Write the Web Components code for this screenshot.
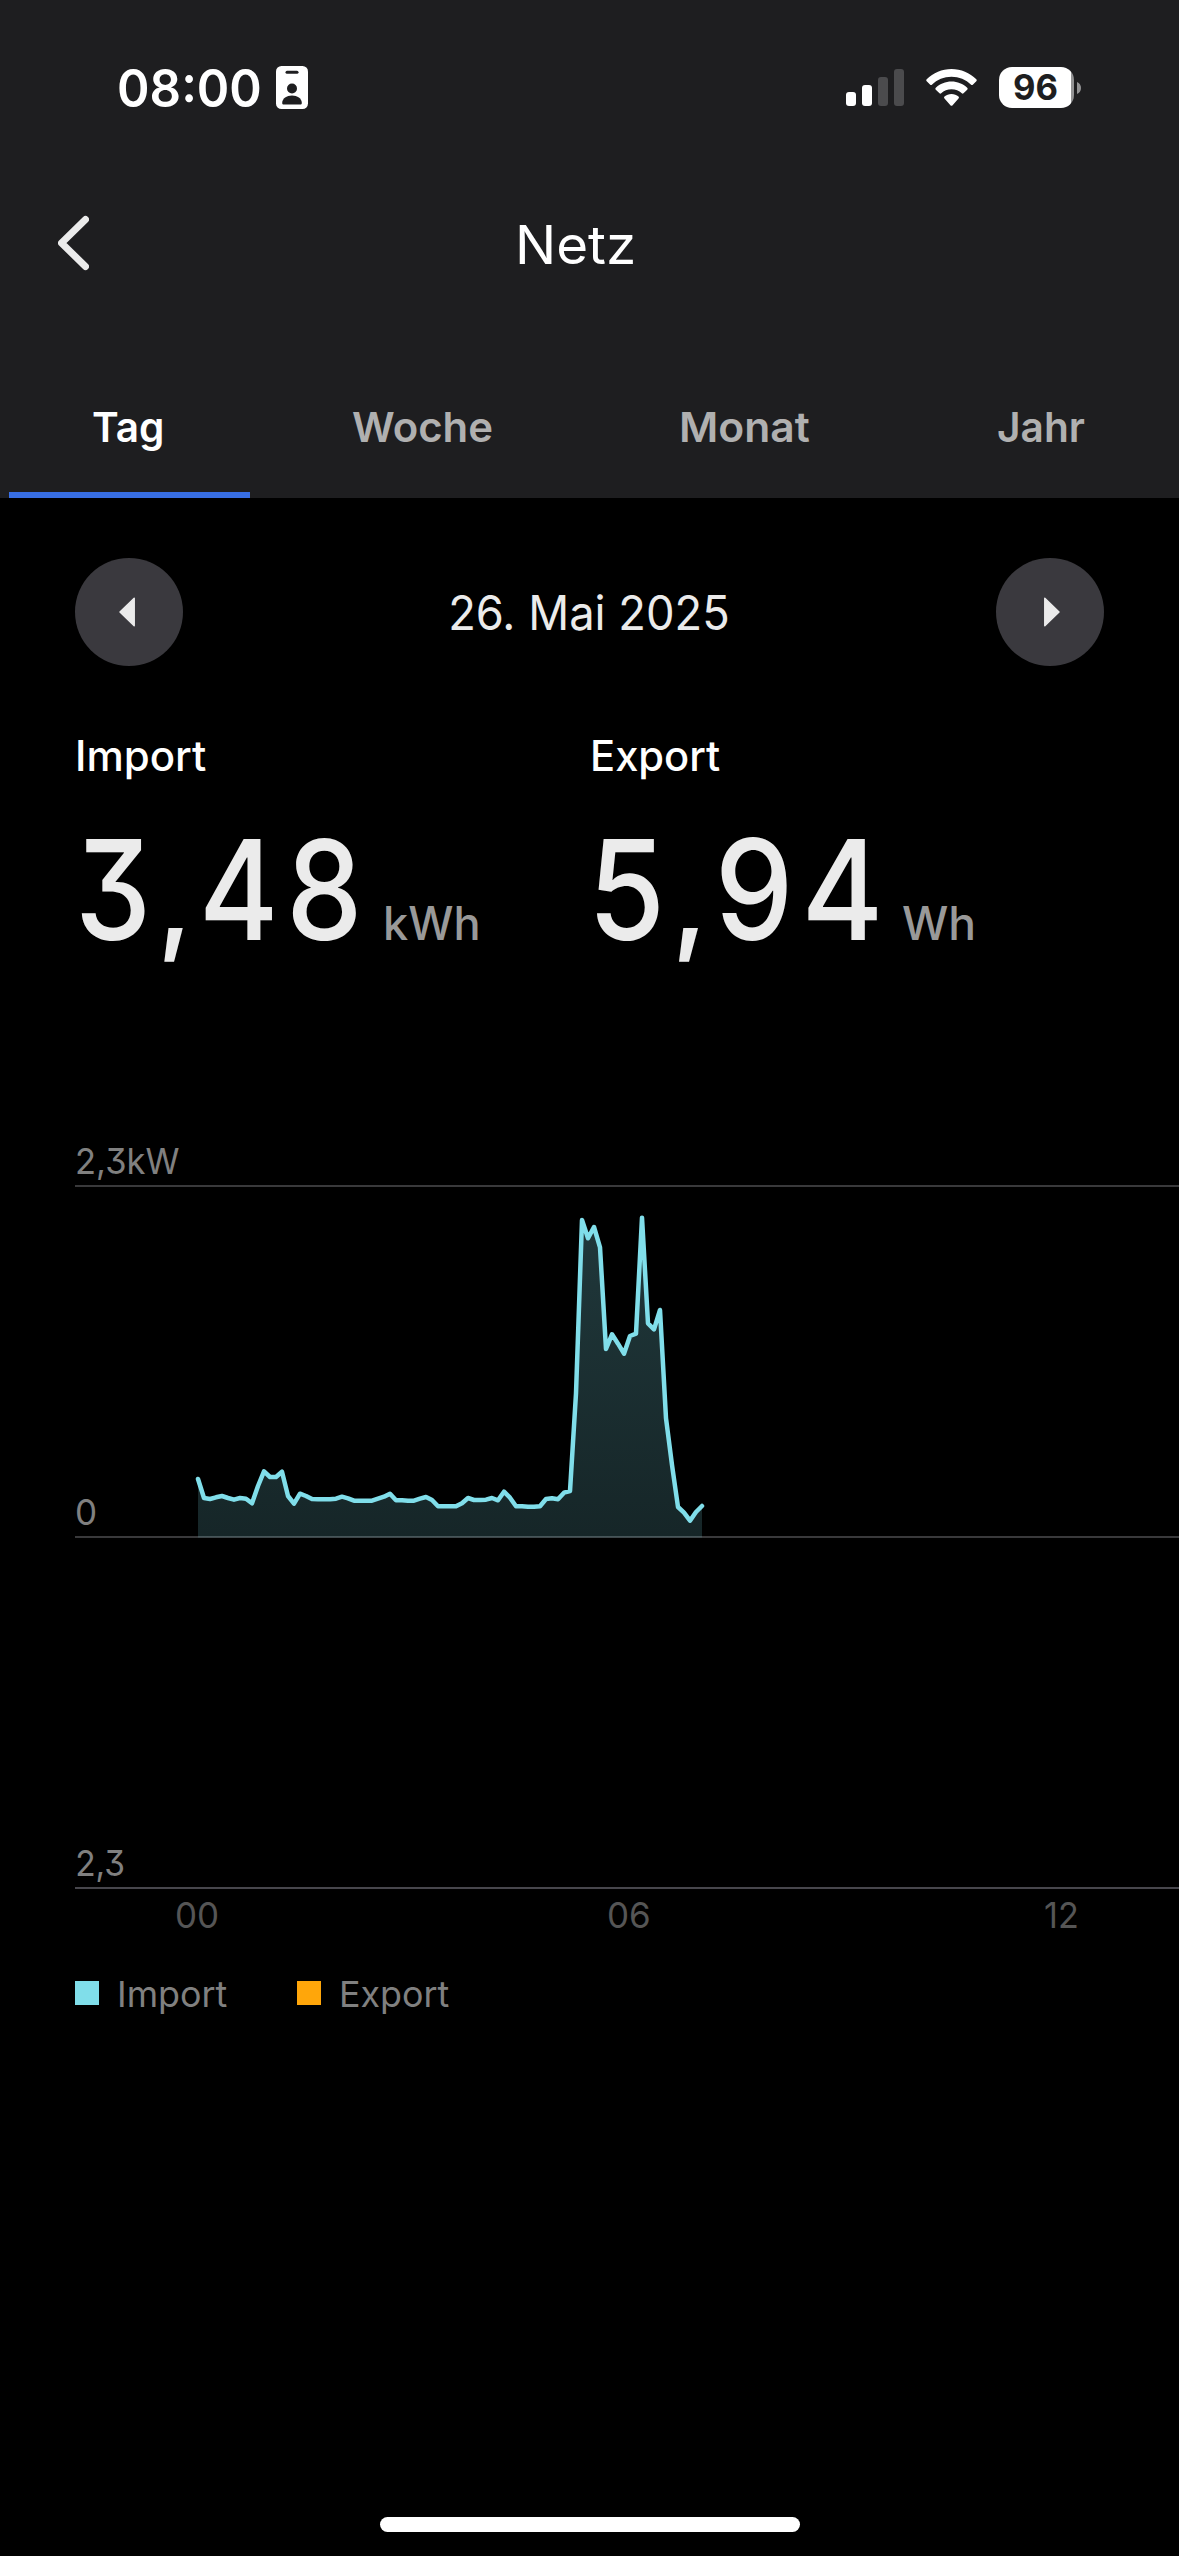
<!DOCTYPE html>
<html lang="de">
<head>
<meta charset="utf-8">
<title>Netz</title>
<style>
html,body{margin:0;background:#000;}
body{width:1179px;height:2556px;overflow:hidden;font-family:Inter,"Liberation Sans",sans-serif;color:#ebebeb;}
</style>
</head>
<body>
<energy-page></energy-page>
<script>
const ctx = document.createElement('canvas').getContext('2d');
const define = (name, html, setup) => customElements.define(name, class extends HTMLElement {
  connectedCallback() {
    if (this.shadowRoot) return;
    this.attachShadow({mode: 'open'}).innerHTML = html;
    if (setup) setup.call(this, this.shadowRoot);
  }
});

/* One line of text whose inked part fills exactly "w" pixels, centred on the cap height. */
define('fit-text', `<style>
:host{display:block;flex:none;white-space:pre}
span{display:block;width:max-content;transform-origin:0 50%;font-feature-settings:"cv09" 1}
b{font-size:.8em;font-weight:700;line-height:0}
</style><span></span>`, function (root) {
  const g = k => this.getAttribute(k);
  const w = +g('w'), size = +g('size'), weight = g('weight') || 400, ls = +(g('ls') || 0);
  const text = g('text'), h = +(g('h') || Math.round(size * 1.2));
  const span = root.querySelector('span');
  if (g('comma') !== null) span.innerHTML = text.replace(',', '<b>,</b>');
  else span.textContent = text;
  ctx.font = `${weight} ${size}px Inter`;
  ctx.letterSpacing = ls + 'px';
  const m = ctx.measureText(text);
  this.style.cssText += `;width:${w}px;height:${h}px`;
  const css = `font-size:${size}px;font-weight:${weight};letter-spacing:${ls}px;line-height:${h}px;`;
  span.style.cssText = css;
  const real = span.getBoundingClientRect().width || m.width;
  const left = -m.actualBoundingBoxLeft, ink = m.actualBoundingBoxRight - left + real - m.width;
  const k = w / ink;
  span.style.cssText = css + `transform:translateX(${-left * k}px) scaleX(${k})`;
});

define('status-bar', `<style>
:host{display:flex;height:44px;padding:66px 98px 0 119px;align-items:flex-start;color:#fff}
.badge{margin-left:16px}
.signal{margin-left:auto}
.wifi{margin-left:22px}
.bat{margin-left:22px;display:flex;gap:3px;align-items:center;height:43px}
.body{display:flex;align-items:center;justify-content:center;width:75px;height:41px;border-radius:13px;color:#1e1e20;background:linear-gradient(90deg,#fff 72px,#929293 72px)}
svg{display:block;flex:none}
</style>
<fit-text text="08:00" w="141" size="51.5" weight="600" h="44"></fit-text>
<svg class="badge" width="32" height="44" viewBox="0 0 32 44"><rect width="32" height="43" rx="5.500" fill="#fff"/><g fill="#1e1e20"><rect x="9.500" y="4.700" width="13" height="3" rx="1.500"/><circle cx="16" cy="22.500" r="5"/><path d="M6.200 37c0-4.600 4.500-7.500 9.800-7.500s9.800 2.900 9.800 7.500c0 1-.7 1.500-1.500 1.500H7.700c-.8 0-1.500-.5-1.500-1.500z"/></g></svg>
<svg class="signal" width="58" height="44" viewBox="0 0 58 44"><g fill="#fff"><rect y="26" width="10" height="14" rx="3"/><rect x="16" y="19" width="10" height="21" rx="3"/></g><g fill="#4b4b4d"><rect x="32" y="11" width="10" height="29" rx="3"/><rect x="48" y="3" width="10" height="37" rx="3"/></g></svg>
<svg class="wifi" width="51" height="44" viewBox="0 0 51 44" fill="#fff"><path d="M25.500 3c9.500 0 18.300 3.800 24.800 10.300.6.600.6 1.300 0 1.900l-3.500 3.500c-.5.500-1.200.5-1.700 0C39.900 13.600 33 10.700 25.500 10.700S11.100 13.600 5.900 18.700c-.5.500-1.200.5-1.700 0L.7 15.200c-.6-.6-.6-1.300 0-1.900C7.200 6.800 16 3 25.500 3z"/><path d="M25.500 15.600c6 0 11.500 2.300 15.700 6.200.6.600.6 1.300 0 1.900l-3.700 3.600c-.5.500-1.100.5-1.700 0-2.700-2.500-6.300-4-10.300-4s-7.600 1.500-10.300 4c-.6.500-1.200.5-1.700 0l-3.700-3.600c-.6-.6-.6-1.300 0-1.900 4.200-3.900 9.700-6.200 15.700-6.200z"/><path d="M25.500 28c2.700 0 5.100 1 7 2.600.6.600.6 1.300 0 1.900l-6.100 6.900c-.5.600-1.200.6-1.800 0l-6.100-6.900c-.6-.6-.6-1.300 0-1.900 1.900-1.600 4.300-2.600 7-2.600z"/></svg>
<div class="bat"><div class="body"><fit-text text="96" w="43" size="35.500" weight="700" h="41" style="margin-right:2px"></fit-text></div><svg width="4" height="12" viewBox="0 0 4 12"><path d="M0 0c2.500.8 4 3.200 4 6s-1.500 5.200-4 6z" fill="#929293"/></svg></div>`);

define('title-bar', `<style>
:host{display:flex;align-items:center;height:60px;padding:104px 0 0 58px}
fit-text{margin-left:430px;margin-top:2px;color:#fff}
svg{display:block}
</style>
<svg width="31" height="58" viewBox="0 0 31 58" fill="none" stroke="#ebebeb" stroke-width="7" stroke-linecap="round" stroke-linejoin="round"><path d="M27.500 4.500 3.500 28l24 23.500"/></svg>
<fit-text text="Netz" w="114.500" size="53.600" weight="400" h="60"></fit-text>`);

define('tab-bar', `<style>
:host{display:flex;height:142px;margin-top:82px;color:#b0b0b0}
div{box-sizing:border-box;height:142px;padding-top:41px;border-bottom:6px solid transparent;display:flex}
.on{color:#fff;width:241px;margin-left:9px;padding-left:84px;border-color:#386fe5}
</style>
<div class="on"><fit-text text="Tag" w="69.500" size="41.500" weight="600" h="60"></fit-text></div>
<div style="padding-left:102.500px"><fit-text text="Woche" w="138.500" size="41.500" weight="600" h="60"></fit-text></div>
<div style="padding-left:190.500px"><fit-text text="Monat" w="127" size="41.500" weight="600" h="60"></fit-text></div>
<div style="padding-left:189px"><fit-text text="Jahr" w="86.500" size="41.500" weight="600" h="60"></fit-text></div>`);

define('round-button', `<style>
:host{display:flex;width:108px;height:108px;border-radius:50%;background:#3a393e;align-items:center;justify-content:center}
:host([next]) svg{transform:scaleX(-1)}
svg{display:block}
</style><svg width="22" height="30" viewBox="0 0 22 30"><path d="M16.200 1.300v27.400L2 15z" fill="#ebebeb" stroke="#ebebeb" stroke-width="1.500" stroke-linejoin="round"/></svg>`);

define('date-picker', `<style>
:host{display:flex;align-items:center;justify-content:space-between;padding:60px 75px 0}
</style>
<round-button></round-button><fit-text text="26. Mai 2025" w="277" size="47.500" weight="400" h="60" style="margin-top:2px"></fit-text><round-button next></round-button>`);

define('energy-value', `<style>
:host{display:block;width:515px;flex:none}
.name{color:#fff;display:flex;padding-left:3px}
.row{display:flex;margin-top:24px;align-items:flex-start}
.unit{color:#999;margin-top:83px}
</style><div class="name"></div><div class="row"></div>`, function (root) {
  const a = k => this.getAttribute(k);
  root.querySelector('.name').innerHTML = `<fit-text text="${a('name')}" w="${a('nw')}" size="42" weight="500" h="60"></fit-text>`;
  root.querySelector('.row').innerHTML = `<fit-text comma text="${a('value')}" w="${a('vw')}" size="139" weight="550" ls="9" h="160" style="margin-left:${a('vx')}px"></fit-text><div class="unit"><fit-text text="${a('unit')}" w="${a('uw')}" size="46" weight="450" h="60" style="margin-left:${a('ux')}px"></fit-text></div>`;
});

define('power-chart', `<style>
:host{display:block;position:relative;height:792px;padding-left:75px}
.row{box-sizing:border-box;border-bottom:2px solid #39393b;display:flex;flex-direction:column;justify-content:flex-end;color:#808080;padding:0 0 1px 1.500px}
.x{display:flex;color:#555;padding-top:3px}
svg{position:absolute;left:0;top:0}
</style>
<div class="row" style="height:60px"><fit-text text="2,3kW" w="102" size="36" weight="400" h="46"></fit-text></div>
<div class="row" style="height:351px"><fit-text text="0" w="18.500" size="36" weight="400" h="46"></fit-text></div>
<div class="row" style="height:351px;border-color:#47464c"><fit-text text="2,3" w="47" size="36" weight="400" h="46"></fit-text></div>
<div class="x"><fit-text text="00" w="40.500" size="36" h="46" style="margin-left:102px"></fit-text><fit-text text="06" w="40.500" size="36" h="46" style="margin-left:391.800px"></fit-text><fit-text text="12" w="32" size="36" h="46" style="margin-left:395.500px"></fit-text></div>
<svg width="1179" height="762" viewBox="0 1127 1179 762"><defs><linearGradient id="g" gradientUnits="userSpaceOnUse" x1="0" y1="1187" x2="0" y2="1538"><stop offset="0" stop-color="#80deea" stop-opacity=".26"/><stop offset="1" stop-color="#80deea" stop-opacity=".17"/></linearGradient></defs><path class="area" fill="url(#g)"/><path class="line" fill="none" stroke="#80deea" stroke-width="4.500" stroke-linejoin="round" stroke-linecap="round"/></svg>`, function (root) {
  /* One sample every five minutes; 6px apart, heights in thirds of a pixel. */
  const v = [927,984,987,982,978,984,989,984,986,1000,948,904,921,921,905,978,1001,971,978,987,988,988,988,986,980,985,992,992,992,992,986,980,971,991,991,992,992,986,981,990,1009,1009,1009,1009,1000,984,990,990,989,984,991,965,983,1009,1009,1010,1010,1009,987,985,988,968,963,670,150,205,171,232,537,493,521,551,498,491,143,460,478,420,745,885,1011,1028,1052,1026,1008];
  const p = v.map((t, i) => `${198 + i * 6} ${(1170 + t / 3).toFixed(1)}`).join('L');
  root.querySelector('.line').setAttribute('d', 'M' + p);
  root.querySelector('.area').setAttribute('d', `M198 1537.500L${p}V1537.500Z`);
});

define('chart-legend', `<style>
:host{display:flex;align-items:flex-start;padding:62px 0 0 75px;color:#808080}
i{width:24px;height:24px;flex:none}
fit-text{margin:-17px 0 0 20.500px}
</style>
<i style="background:#80deea"></i><fit-text text="Import" w="107.500" size="36" h="60"></fit-text>
<i style="background:#ffa60a;margin-left:70px"></i><fit-text text="Export" w="107.500" size="36" h="60"></fit-text>`);

define('energy-page', `<style>
:host{display:flex;flex-direction:column;height:2556px;background:#000}
header{background:#1e1e20;height:498px;flex:none}
.values{display:flex;margin-top:60px;padding-left:75px;height:401px}
.home{width:420px;height:15px;border-radius:7.500px;background:#fff;margin:auto auto 24px 380px}
</style>
<header><status-bar></status-bar><title-bar></title-bar><tab-bar></tab-bar></header>
<date-picker></date-picker>
<div class="values">
<energy-value name="Import" nw="128" value="3,48" vw="275" vx="6" unit="kWh" uw="92" ux="30"></energy-value>
<energy-value name="Export" nw="127" value="5,94" vw="280" vx="7" unit="Wh" uw="70.500" ux="26"></energy-value>
</div>
<power-chart></power-chart>
<chart-legend></chart-legend>
<div class="home"></div>`);
</script>
</body>
</html>
